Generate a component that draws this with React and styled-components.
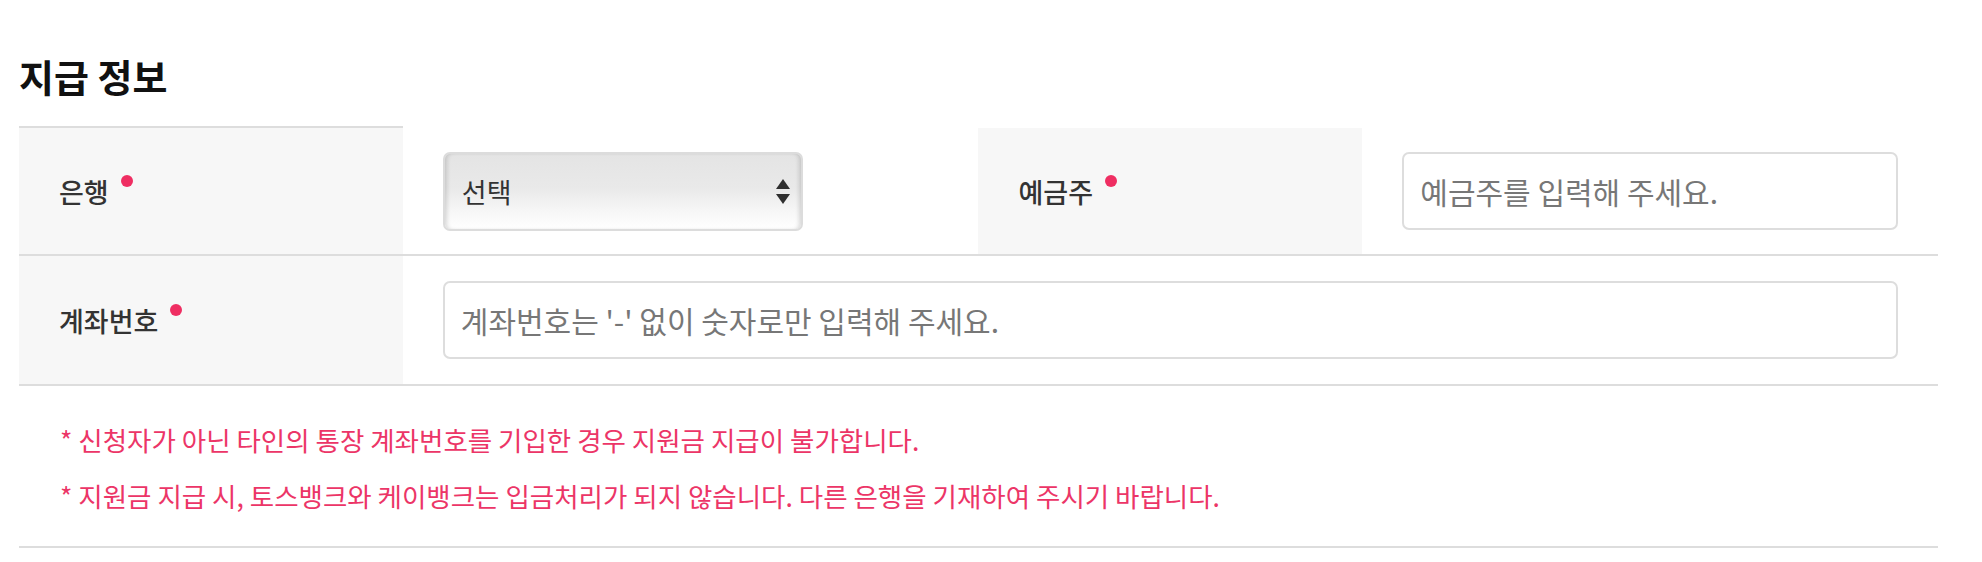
import React from "react";
import styled, { createGlobalStyle } from "styled-components";

const GlobalStyle = createGlobalStyle`
  * {
    box-sizing: border-box;
  }

  body {
    margin: 0;
    background: #fff;
    font-family: "Noto Sans CJK KR", "Noto Sans", sans-serif;
    color: #333;
  }
`;

const Page = styled.div`
  width: 1919px;
  margin-left: 19px;
  padding-top: 54px;
`;

const Title = styled.h2`
  margin: 0 0 28px;
  font-size: 38px;
  line-height: 44px;
  font-weight: 700;
  color: #111;
`;

const Row = styled.div`
  display: grid;
  grid-template-columns: 20% 30% 20% 30%;
  height: 130px;
  padding-top: ${({ $lead }) => ($lead ? "2px" : "0")};
  border-bottom: 2px solid #ddd;
`;

const LabelCell = styled.div`
  display: flex;
  align-items: center;
  padding-left: 40px;
  background: #f7f7f7;
  ${({ $topLine }) =>
    $topLine &&
    `
    margin-top: -2px;
    border-top: 2px solid #ddd;
  `}
`;

const Label = styled.span`
  display: inline-flex;
  align-items: flex-start;
  font-size: 27px;
  line-height: 27px;
  font-weight: 500;
  color: #333;

  &::after {
    content: "";
    width: 12px;
    height: 12px;
    margin-left: 12px;
    margin-top: -3px;
    border-radius: 50%;
    background: #ef2e62;
  }
`;

const ValueCell = styled.div`
  display: flex;
  align-items: center;
  padding: 0 40px;
  grid-column: ${({ $span }) => ($span ? `span ${$span}` : "auto")};
`;

const SelectWrap = styled.div`
  position: relative;
  width: 360px;
  height: 79px;
`;

const Select = styled.select`
  appearance: none;
  width: 100%;
  height: 100%;
  padding: 0 40px 0 17px;
  border: 2px solid #dcdcdc;
  border-radius: 7px;
  background: linear-gradient(#e4e4e4 0%, #e9e9e9 45%, #f6f6f6 75%, #ffffff 100%);
  box-shadow: inset 4px 0 4px -2px rgba(0, 0, 0, 0.14),
    inset -4px 0 4px -2px rgba(0, 0, 0, 0.14);
  font-family: inherit;
  font-size: 27px;
  color: #333;
  outline: none;
`;

const Arrows = styled.svg`
  position: absolute;
  top: 27px;
  right: 13px;
  width: 14px;
  height: 26px;
  pointer-events: none;
`;

const TextInput = styled.input`
  width: 100%;
  height: 78px;
  padding: 0 16px;
  border: 2px solid #ddd;
  border-radius: 7px;
  background: #fff;
  font-family: inherit;
  font-size: 30px;
  color: #333;
  outline: none;

  &::placeholder {
    color: #777;
  }
`;

const Notes = styled.ul`
  display: flex;
  flex-direction: column;
  gap: 20px;
  margin: 0;
  padding: 36px 41px 32px;
  list-style: none;
  border-bottom: 2px solid #ddd;
`;

const Note = styled.li`
  font-size: 26.5px;
  line-height: 36px;
  color: #ec3567;
`;

const App = () => {
  return (
    <Page>
      <GlobalStyle />
      <Title>지급 정보</Title>
      <Row $lead>
        <LabelCell $topLine>
          <Label>은행</Label>
        </LabelCell>
        <ValueCell>
          <SelectWrap>
            <Select defaultValue="">
              <option value="">선택</option>
            </Select>
            <Arrows viewBox="0 0 14 26">
              <path d="M7 0 L14 10 L0 10 Z" fill="#2f2f2f" />
              <path d="M0 15 L14 15 L7 25 Z" fill="#2f2f2f" />
            </Arrows>
          </SelectWrap>
        </ValueCell>
        <LabelCell>
          <Label>예금주</Label>
        </LabelCell>
        <ValueCell>
          <TextInput placeholder="예금주를 입력해 주세요." />
        </ValueCell>
      </Row>
      <Row>
        <LabelCell>
          <Label>계좌번호</Label>
        </LabelCell>
        <ValueCell $span={3}>
          <TextInput placeholder="계좌번호는 '-' 없이 숫자로만 입력해 주세요." />
        </ValueCell>
      </Row>
      <Notes>
        <Note>* 신청자가 아닌 타인의 통장 계좌번호를 기입한 경우 지원금 지급이 불가합니다.</Note>
        <Note>* 지원금 지급 시, 토스뱅크와 케이뱅크는 입금처리가 되지 않습니다. 다른 은행을 기재하여 주시기 바랍니다.</Note>
      </Notes>
    </Page>
  );
};

export default App;
